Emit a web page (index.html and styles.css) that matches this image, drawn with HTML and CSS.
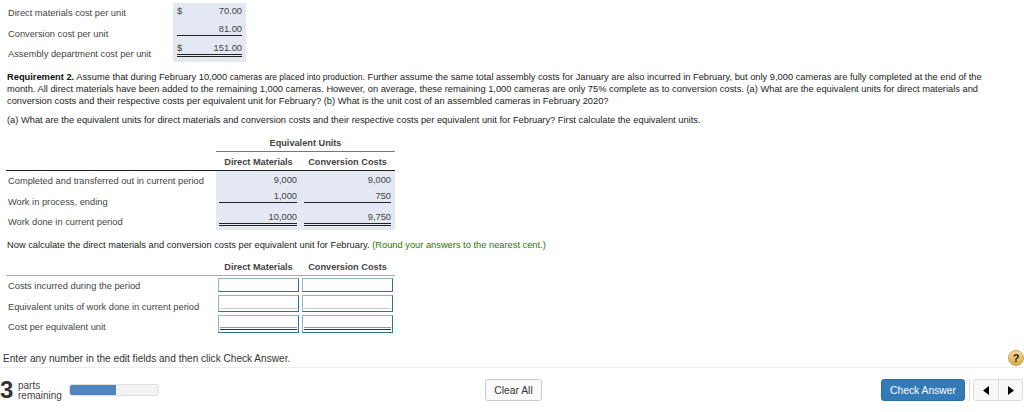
FILE: index.html
```html
<!DOCTYPE html>
<html>
<head>
    <title>Equivalent Units</title>
    <link rel="stylesheet" href="styles.css">
</head>
<body>

<div class="content">
    <div class="cost-table">
        <div class="cost-labels">
            <div>Direct materials cost per unit</div>
            <div>Conversion cost per unit</div>
            <div>Assembly department cost per unit</div>
        </div>
        <div class="cost-values">
            <div class="cost-val first"><span class="dollar">$</span>70.00</div>
            <div class="cost-val second single">81.00</div>
            <div class="cost-val double"><span class="dollar">$</span>151.00</div>
        </div>
    </div>

    <p class="req"><b>Requirement 2.</b> Assume that during February 10,000 <span class="small">cameras are placed into production.</span> Further assume the same total assembly costs for January are also incurred in February, but only 9,000 cameras are fully completed at the end of the<br>month. All direct materials have been added to the remaining 1,000 cameras. However, on average, these remaining 1,000 cameras are only 75% complete as to conversion costs. (a) What are the equivalent units for direct materials and<br>conversion costs and their respective costs per equivalent unit for February? (b) What is the unit cost of an assembled cameras in February 2020?</p>

    <p class="question">(a) What are the equivalent units for direct materials and conversion costs and their respective costs per equivalent unit for February? First calculate the equivalent units.</p>

    <div class="units-table">
        <div class="units-head">
            <div class="group-head">Equivalent Units</div>
            <div class="col-heads">
                <div>Direct Materials</div>
                <div>Conversion Costs</div>
            </div>
        </div>
        <div class="units-body">
            <div class="row-labels">
                <div>Completed and transferred out in current period</div>
                <div>Work in process, ending</div>
                <div>Work done in current period</div>
            </div>
            <div class="units-values">
                <div class="num">9,000</div>
                <div class="num">9,000</div>
                <div class="num single">1,000</div>
                <div class="num single">750</div>
                <div class="num double">10,000</div>
                <div class="num double">9,750</div>
            </div>
        </div>
    </div>

    <p class="now">Now calculate the direct materials and conversion costs per equivalent unit for February. <span class="hint">(Round your answers to the nearest cent.)</span></p>

    <div class="input-table">
        <div class="col-heads">
            <div>Direct Materials</div>
            <div>Conversion Costs</div>
        </div>
        <div class="input-body">
            <div class="row-labels">
                <div>Costs incurred during the period</div>
                <div>Equivalent units of work done in current period</div>
                <div>Cost per equivalent unit</div>
            </div>
            <div class="input-fields">
                <div class="field"></div>
                <div class="field"></div>
                <div class="field tall"><div class="line-single"></div></div>
                <div class="field tall"><div class="line-single"></div></div>
                <div class="field taller"><div class="line-double"></div></div>
                <div class="field taller"><div class="line-double"></div></div>
            </div>
        </div>
    </div>
</div>

<div class="prompt">
    <span>Enter any number in the edit fields and then click Check Answer.</span>
    <span class="help">?</span>
</div>

<div class="footer">
    <div class="parts">
        <span class="parts-num">3</span>
        <span class="parts-text">parts<br>remaining</span>
        <div class="progress"><div class="progress-bar"></div></div>
    </div>
    <button class="btn clear">Clear All</button>
    <button class="btn check">Check Answer</button>
    <div class="pager">
        <button class="page-btn"><svg width="6" height="9" viewBox="0 0 6 9"><path d="M6 0V9L0 4.5Z"/></svg></button>
        <button class="page-btn"><svg width="6" height="9" viewBox="0 0 6 9"><path d="M0 0V9L6 4.5Z"/></svg></button>
    </div>
</div>

</body>
</html>
```
FILE: styles.css
```css
html, body {
    height: 412px;
    overflow: hidden;
}

body {
    margin: 0;
    background: #fff;
    color: #444;
    font-family: 'Liberation Sans', Arial, sans-serif;
    font-size: 9.3px;
}

.content {
    padding: 3px 0 0 6px;
}

/* top table */
.cost-table {
    display: flex;
    height: 59px;
}

.cost-labels {
    width: 167px;
    padding: 4px 0 0 2px;
    box-sizing: border-box;
    line-height: 12px;
}

.cost-labels div {
    height: 20.5px;
}

.cost-values {
    width: 73px;
    padding: 2px 4px 0;
    box-sizing: border-box;
    background: #e3e8f2;
}

.cost-val {
    line-height: 12px;
    text-align: right;
}

.cost-val.first {
    margin-bottom: 6px;
}

.cost-val.second {
    margin-bottom: 6px;
}

.dollar {
    float: left;
}

.single {
    border-bottom: 1px solid #222;
}

.double {
    border-bottom: 3px double #222;
}

.req,
.question,
.now {
    color: #222;
    line-height: 12px;
    font-size: 9.3px;
    white-space: nowrap;
}

.req {
    margin: 9px 0 0 1px;
}

.req b {
    color: #111;
}

.small {
    font-size: 8.5px;
}

.question {
    margin: 7px 0 0 1px;
}

.now {
    margin: 0 0 0 1px;
}

.hint {
    color: #2a7a00;
}

/* answer tables */
.units-table {
    width: 389px;
    margin-top: 10px;
}

.units-head {
    margin-left: 210px;
}

.group-head {
    height: 15px;
    border-bottom: 1px solid #777;
    text-align: center;
    font-weight: bold;
    line-height: 15px;
    font-size: 9.2px;
}

.col-heads {
    display: flex;
    height: 15px;
    padding-top: 3px;
    font-weight: bold;
    font-size: 9.2px;
    line-height: 15px;
}

.col-heads div {
    flex: 0 0 93px;
    text-align: center;
}

.col-heads div:first-child {
    flex-basis: 85px;
}

.units-body {
    display: flex;
    height: 59px;
    border-top: 1px solid #222;
    margin-bottom: 9px;
}

.row-labels {
    width: 210px;
    padding-left: 2px;
    box-sizing: border-box;
}

.row-labels div {
    height: 20.5px;
    padding-top: 4px;
    box-sizing: border-box;
    line-height: 12px;
}

.units-values {
    flex: 1;
    display: grid;
    grid-template-columns: 78px 87px;
    grid-template-rows: 16px 21px 16px;
    column-gap: 7px;
    align-items: start;
    padding: 3px 4px 0 3px;
    background: #e3e8f2;
}

.num {
    text-align: right;
    line-height: 12px;
}

/* inputs */
.input-table {
    width: 389px;
    margin-top: 9px;
}

.input-table .col-heads {
    margin-left: 210px;
    padding-top: 0;
}

.input-body {
    display: flex;
    border-top: 1px solid #aaa;
}

.input-fields {
    flex: 1;
    display: grid;
    grid-template-columns: 81px 91px;
    column-gap: 3px;
    row-gap: 3px;
    padding: 2px 2px 0 2px;
    align-content: start;
}

.field {
    height: 14px;
    box-sizing: border-box;
    border: 1px solid #8db4c6;
    border-bottom-color: #2f7391;
    border-right-color: #2f7391;
    display: flex;
    flex-direction: column;
    justify-content: flex-end;
    padding: 0 1px 2px;
}

.field.tall {
    height: 17px;
}

.field.taller {
    height: 18px;
}

.line-single {
    border-bottom: 1px solid #ccc;
}

.line-double {
    height: 1px;
    border-top: 1px solid #999;
    border-bottom: 1px solid #333;
}

/* prompt and footer */
.prompt {
    position: absolute;
    left: 0;
    right: 0;
    top: 352px;
    height: 15px;
    padding: 0 0 0 3px;
    border-bottom: 1px solid #eee;
    line-height: 13px;
    font-size: 10.1px;
    color: #333;
}

.help {
    position: absolute;
    right: 0;
    top: -2px;
    width: 16px;
    height: 16px;
    box-sizing: border-box;
    border-radius: 50%;
    background: linear-gradient(#f6dc9c, #dca840);
    border: 1px solid #c9a355;
    color: #222;
    font-weight: bold;
    font-size: 11px;
    line-height: 14px;
    text-align: center;
}

.footer {
    position: absolute;
    left: 0;
    right: 0;
    top: 368px;
    height: 44px;
}

.parts {
    display: flex;
    align-items: center;
    height: 24px;
    margin-top: 10px;
}

.parts-num {
    width: 18px;
    font-size: 24px;
    font-weight: bold;
    color: #333;
    line-height: 24px;
}

.parts-text {
    width: 51px;
    margin-top: 2px;
    line-height: 10px;
    font-size: 10px;
    color: #444;
}

.progress {
    width: 90px;
    height: 12px;
    border-radius: 3px;
    background: #f3f3f3;
    border: 1px solid #e0e0e0;
    box-sizing: border-box;
}

.progress-bar {
    width: 46px;
    height: 100%;
    background: #4f86c0;
    border-radius: 2px 0 0 2px;
}

.btn {
    position: absolute;
    top: 11px;
    height: 22px;
    box-sizing: border-box;
    border-radius: 3px;
    font-family: inherit;
    font-size: 10.3px;
    padding: 0;
}

.clear {
    left: 485px;
    width: 57px;
    background: #fafafa;
    border: 1px solid #ccc;
    color: #333;
}

.check {
    left: 881px;
    width: 84px;
    background: #337ab7;
    border: 1px solid #2e6da4;
    color: #fff;
}

.pager {
    position: absolute;
    left: 973px;
    top: 11px;
    display: flex;
    height: 22px;
    box-sizing: border-box;
    border: 1px solid #ddd;
    border-radius: 3px;
    background: #f8f8f8;
}

.pager::before {
    content: "";
    position: absolute;
    left: -5px;
    top: -1px;
    height: 22px;
    border-left: 1px solid #ddd;
}

.page-btn {
    width: 24px;
    padding: 0;
    border: 0;
    background: transparent;
}

.page-btn + .page-btn {
    border-left: 1px solid #ddd;
}
```
